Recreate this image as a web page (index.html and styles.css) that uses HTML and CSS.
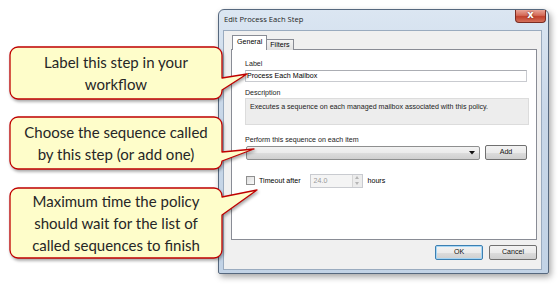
FILE: index.html
```html
<!DOCTYPE html>
<html lang="en">
<head>
    <meta charset="UTF-8">
    <title>Edit Process Each Step</title>
    <link rel="stylesheet" href="styles.css">
</head>
<body>
    <div class="stage">
        <div class="dialog">
            <div class="titlebar">
                <span class="title">Edit Process Each Step</span>
                <span class="close">x</span>
            </div>
            <div class="client">
                <div class="tabs">
                    <div class="tab active">General</div>
                    <div class="tab">Filters</div>
                </div>
                <div class="panel">
                    <div class="field-label">Label</div>
                    <div class="textbox">Process Each Mailbox</div>
                    <div class="field-label spaced">Description</div>
                    <div class="desc">Executes a sequence on each managed mailbox associated with this policy.</div>
                    <div class="field-label perform">Perform this sequence on each item</div>
                    <div class="row">
                        <div class="combo">
                            <svg class="combo-arrow" width="6" height="4" viewBox="0 0 6 4"><path d="M0 0H6L3 3.5Z" fill="#111"/></svg>
                        </div>
                        <div class="btn add">Add</div>
                    </div>
                    <div class="row timeout">
                        <span class="check"></span>
                        <span class="timeout-text">Timeout after</span>
                        <div class="spin">
                            <span class="spin-value">24.0</span>
                            <span class="spin-arrows">
                                <svg width="4" height="3" viewBox="0 0 4 3"><path d="M0 3H4L2 0Z" fill="#b5b5b5"/></svg>
                                <svg width="4" height="3" viewBox="0 0 4 3"><path d="M0 0H4L2 3Z" fill="#b5b5b5"/></svg>
                            </span>
                        </div>
                        <span class="hours">hours</span>
                    </div>
                </div>
                <div class="actions">
                    <div class="btn default">OK</div>
                    <div class="btn">Cancel</div>
                </div>
            </div>
        </div>

        <!-- annotation balloons -->
        <div class="callout c1">
            <svg class="balloon" width="212" height="52"><path d="M8 0H204A8 8 0 0 1 212 8V31L237 27L212 43V44A8 8 0 0 1 204 52H8A8 8 0 0 1 0 44V8A8 8 0 0 1 8 0Z"/></svg>
            <p>Label this step in your<br>workflow</p>
        </div>
        <div class="callout c2">
            <svg class="balloon" width="212" height="52"><path d="M8 0H204A8 8 0 0 1 212 8V35L244 32L212 44A8 8 0 0 1 204 52H8A8 8 0 0 1 0 44V8A8 8 0 0 1 8 0Z"/></svg>
            <p>Choose the sequence called<br>by this step (or add one)</p>
        </div>
        <div class="callout c3">
            <svg class="balloon" width="212" height="70"><path d="M8 0H204A8 8 0 0 1 212 8V9L247 2L212 27V62A8 8 0 0 1 204 70H8A8 8 0 0 1 0 62V8A8 8 0 0 1 8 0Z"/></svg>
            <p>Maximum time the policy<br>should wait for the list of<br>called sequences to finish</p>
        </div>
    </div>
</body>
</html>
```

FILE: styles.css
```css
body {
    margin: 0;
    background: #fff;
    font-family: 'Liberation Sans', Arial, sans-serif;
    color: #000;
}

.stage {
    position: relative;
    width: 558px;
    height: 286px;
    overflow: hidden;
}

/* dialog window */
.dialog {
    display: flex;
    flex-direction: column;
    box-sizing: border-box;
    width: 331px;
    height: 265px;
    margin: 9px 0 0 218px;
    border: 1px solid #56687e;
    border-radius: 6px 6px 2px 2px;
    background: linear-gradient(#dbe6f2, #c8d7e8 40%, #c2d3e6);
    box-shadow: 2px 3px 6px rgba(0, 0, 0, 0.35);
}

.titlebar {
    display: flex;
    align-items: flex-start;
    height: 20px;
    padding-left: 5px;
}

.title {
    margin-top: 4px;
    font-family: 'Open Sans', sans-serif;
    font-size: 7.6px;
    line-height: 11px;
    color: #1e1e1e;
}

.close {
    margin-left: auto;
    margin-right: 2px;
    width: 31px;
    height: 13px;
    box-sizing: border-box;
    border: 1px solid #7a2c22;
    border-top: none;
    border-radius: 0 0 4px 4px;
    background: linear-gradient(#e9a598, #d46a57 45%, #c0412d 55%, #d5705a);
    color: #fff;
    font-family: 'DejaVu Sans', sans-serif;
    font-weight: bold;
    font-size: 10px;
    line-height: 10px;
    text-align: center;
    text-shadow: 0 0 2px #5a1a10;
}

.client {
    flex: 1;
    display: flex;
    flex-direction: column;
    margin: 0 6px 3px 4px;
    padding: 4px 4px 0 7px;
    border: 1px solid #9aabbf;
    background: #f0f0f0;
    font-size: 7.1px;
}

/* tabs */
.tabs {
    display: flex;
    align-items: flex-end;
    padding-left: 1px;
    position: relative;
    z-index: 1;
    margin-bottom: -1px;
}

.tab {
    box-sizing: border-box;
    height: 11px;
    padding: 0 3px;
    border: 1px solid #898c95;
    border-bottom: none;
    background: linear-gradient(#f4f4f4, #e2e2e2);
    line-height: 10px;
}

.tab.active {
    height: 15px;
    padding: 0 4px;
    margin-right: -1px;
    background: #fff;
    line-height: 12px;
}

.panel {
    display: flex;
    flex-direction: column;
    box-sizing: border-box;
    height: 191px;
    padding: 9px 9px 0 13px;
    border: 1px solid #898c95;
    background: #fff;
}

.field-label {
    line-height: 10px;
    color: #222;
}

.field-label.spaced {
    margin-top: 6px;
}

.field-label.perform {
    margin-top: 10px;
}

.textbox {
    box-sizing: border-box;
    height: 12px;
    margin-top: 1px;
    padding-left: 1px;
    border: 1px solid #c9cbd0;
    border-top-color: #abadb3;
    line-height: 10px;
}

.desc {
    box-sizing: border-box;
    height: 27px;
    margin-right: -2px;
    padding: 3px 4px;
    border: 1px solid #dcdcdc;
    background: #ededed;
    line-height: 10px;
    color: #222;
}

.row {
    display: flex;
    align-items: center;
    gap: 5px;
    height: 15px;
}

.combo {
    flex: 1;
    display: flex;
    align-items: center;
    justify-content: flex-end;
    box-sizing: border-box;
    height: 14px;
    margin-left: 1px;
    padding-right: 4px;
    border: 1px solid #8e8f8f;
    border-radius: 2px;
    background: linear-gradient(#f2f2f2, #ebebeb 50%, #dddddd 50%, #cfcfcf);
}

.btn {
    box-sizing: border-box;
    width: 48px;
    height: 15px;
    border: 1px solid #707070;
    border-radius: 2px;
    background: linear-gradient(#f2f2f2, #ebebeb 50%, #dddddd 50%, #cfcfcf);
    line-height: 13px;
    text-align: center;
    color: #111;
}

.btn.add {
    width: 42px;
}

.btn.default {
    border-color: #3c7fb1;
    box-shadow: inset 0 0 0 1px #a6d6f5;
}

.timeout {
    margin-top: 13px;
    gap: 0;
}

.check {
    box-sizing: border-box;
    width: 9px;
    height: 9px;
    margin-left: 1px;
    border: 1px solid #8f8f8f;
    background: linear-gradient(135deg, #dcdcdc, #fafafa);
}

.timeout-text {
    margin-left: 4px;
}

.spin {
    display: flex;
    align-items: center;
    box-sizing: border-box;
    width: 53px;
    height: 14px;
    margin-left: 9px;
    padding-left: 3px;
    border: 1px solid #c9cbd0;
    background: #f4f4f4;
}

.spin-value {
    flex: 1;
    color: #9a9a9a;
}

.spin-arrows {
    display: flex;
    flex-direction: column;
    align-items: center;
    justify-content: space-around;
    width: 9px;
    height: 12px;
    border-left: 1px solid #d6d6d6;
    background: #ececec;
}

.spin-arrows svg {
    display: block;
}

.hours {
    margin-left: 5px;
}

.actions {
    display: flex;
    justify-content: flex-end;
    gap: 6px;
    margin-top: 5px;
}

/* callouts */
.callout {
    position: absolute;
    left: 10px;
    width: 212px;
    z-index: 2;
}

.callout.c1 { top: 47px; height: 52px; }
.callout.c2 { top: 117px; height: 52px; }
.callout.c3 { top: 188px; height: 70px; }

.balloon {
    position: absolute;
    left: 0;
    top: 0;
    overflow: visible;
    filter: drop-shadow(1px 2px 1.5px rgba(0, 0, 0, 0.35));
}

.balloon path {
    fill: #fefdca;
    stroke: #c00000;
    stroke-width: 1.3;
    stroke-linejoin: round;
}

.callout p {
    position: relative;
    display: flex;
    align-items: center;
    justify-content: center;
    height: 100%;
    margin: 0;
    font-family: Lato, 'Open Sans', sans-serif;
    font-size: 15px;
    line-height: 22px;
    text-align: center;
    color: #262626;
}
```
